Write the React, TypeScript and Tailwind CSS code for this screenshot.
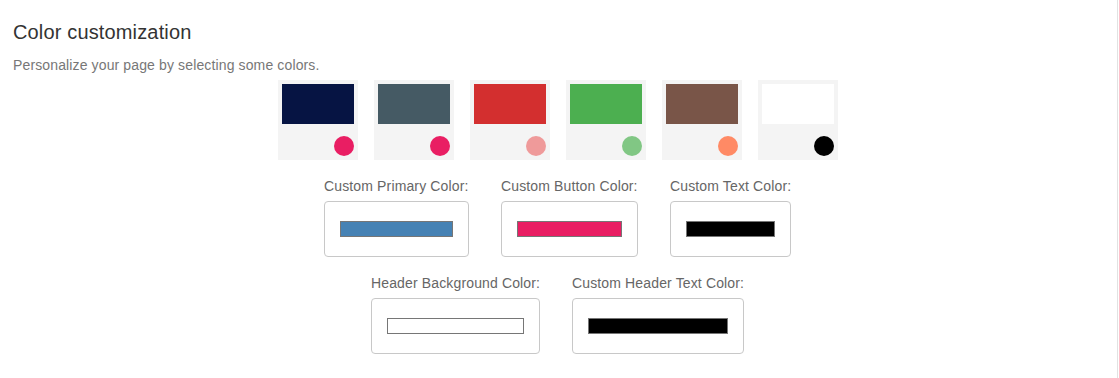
const themes = [
  { main: "#061443", accent: "#e91e63" },
  { main: "#455a64", accent: "#e91e63" },
  { main: "#d32f2f", accent: "#ef9a9a" },
  { main: "#4caf50", accent: "#81c784" },
  { main: "#795548", accent: "#ff8a65" },
  { main: "#ffffff", accent: "#000000" },
]

function ColorField({ label, width, color }: { label: string; width: string; color: string }) {
  return (
    <div className={`flex flex-col ${width}`}>
      <label className="text-[14px] leading-[20px] tracking-[0.14px] text-[#666] whitespace-nowrap">{label}</label>
      <div className="mt-[5px] h-[56px] rounded-[4px] border border-[#c8c8c8] bg-white px-[15px] py-[19px]">
        <div className="h-[16px] w-full border border-[#767676]" style={{ backgroundColor: color }} />
      </div>
    </div>
  )
}

export default function App() {
  return (
    <div className="h-[378px] w-[1119px] bg-white font-['Liberation_Sans',Arial,sans-serif]">
      <div className="flex h-full w-[1118px] flex-col border-r border-[#e2e2e2] pl-[13px] pr-[15px] pt-[21px]">
        <h4 className="text-[20px] leading-[22px] tracking-[0.15px] text-[#333]">Color customization</h4>
        <p className="mt-[12px] text-[14px] leading-[20px] tracking-[0.13px] text-[#777]">
          Personalize your page by selecting some colors.
        </p>

        <div className="mt-[5px] flex justify-center gap-4">
          {themes.map((t) => (
            <div key={t.main} className="flex h-20 w-20 flex-col gap-3 bg-[#f4f4f4] p-1">
              <div className="h-10 w-full" style={{ backgroundColor: t.main }} />
              <div className="h-5 w-5 self-end rounded-full" style={{ backgroundColor: t.accent }} />
            </div>
          ))}
        </div>

        <div className="mt-4 flex justify-center gap-8">
          <ColorField label="Custom Primary Color:" width="w-[145px]" color="#4682b4" />
          <ColorField label="Custom Button Color:" width="w-[137px]" color="#e91e63" />
          <ColorField label="Custom Text Color:" width="w-[121px]" color="#000000" />
        </div>

        <div className="mt-4 flex justify-center gap-8">
          <ColorField label="Header Background Color:" width="w-[169px]" color="#ffffff" />
          <ColorField label="Custom Header Text Color:" width="w-[172px]" color="#000000" />
        </div>
      </div>
    </div>
  )
}
